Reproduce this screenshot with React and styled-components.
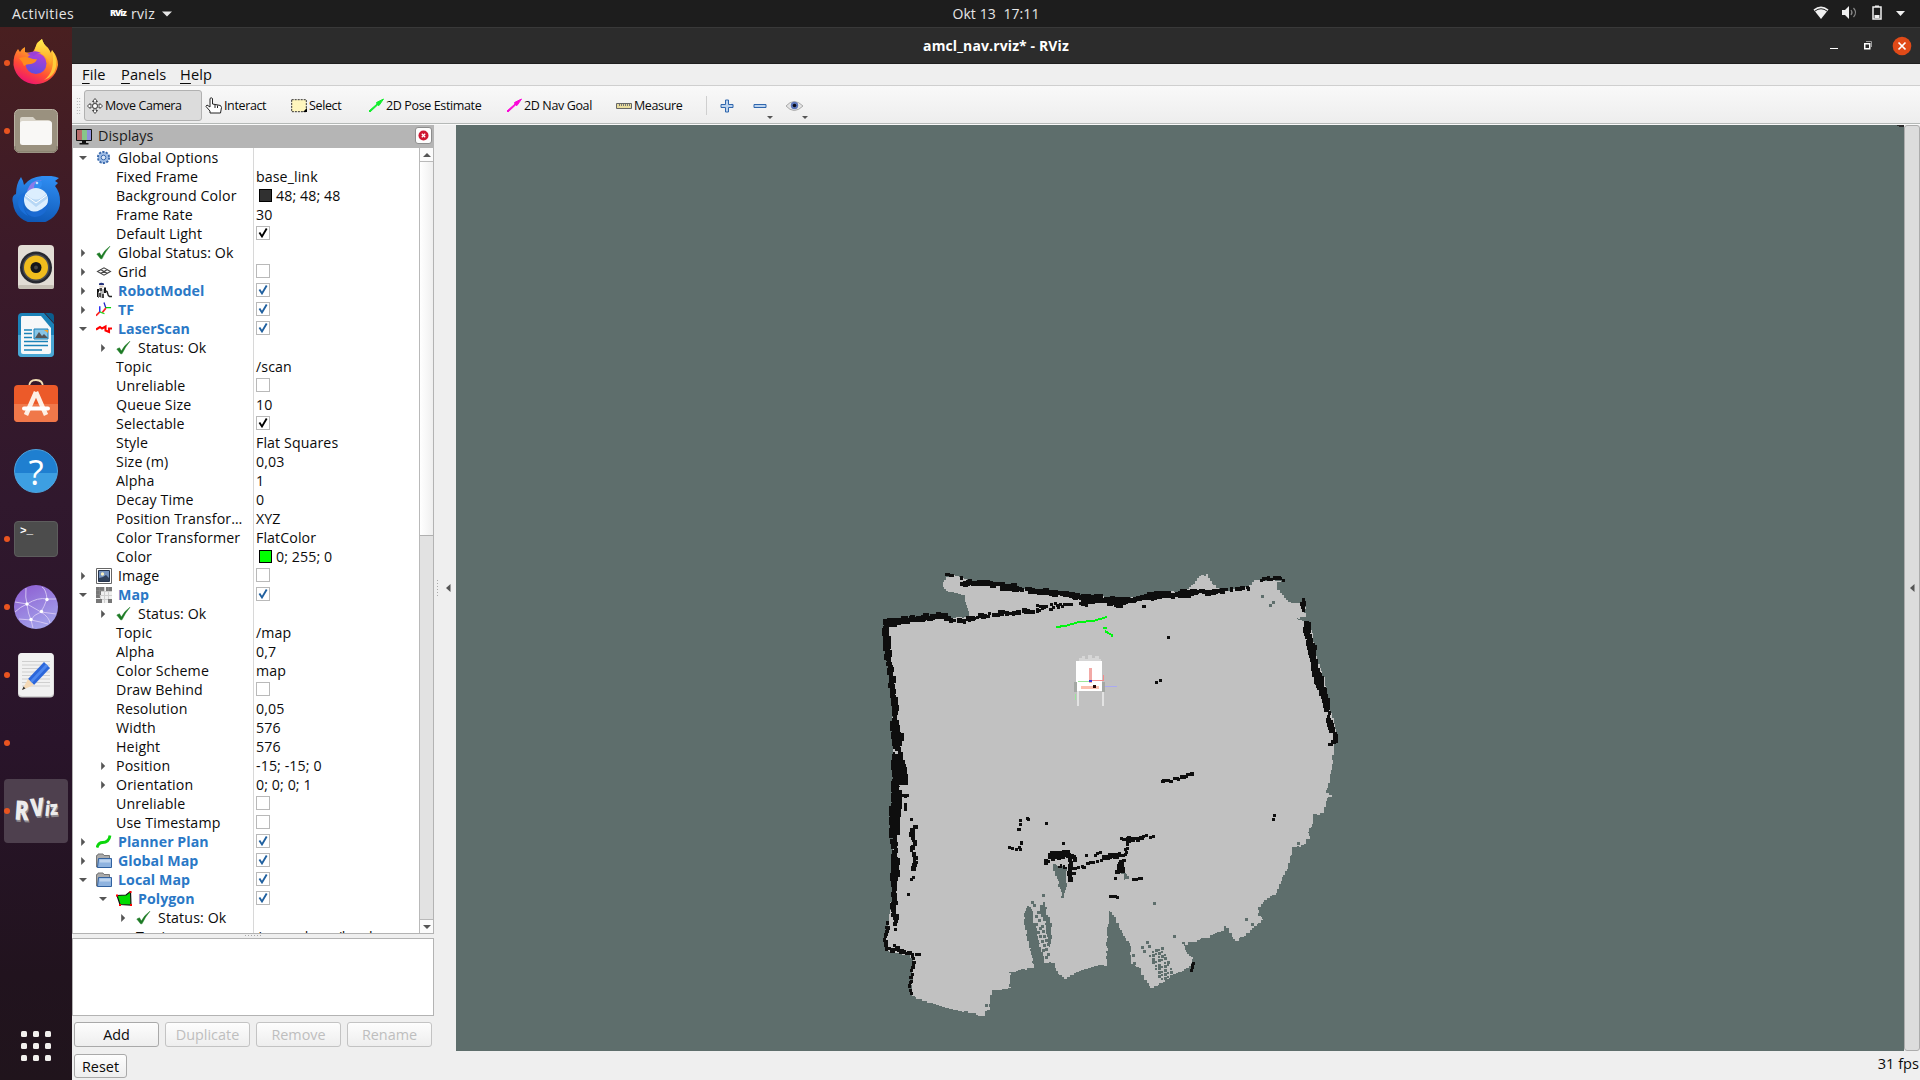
import React from 'react';
import styled, { createGlobalStyle } from 'styled-components';

const Global = createGlobalStyle`
  * { box-sizing: border-box; }
  html, body { margin: 0; padding: 0; overflow: hidden; background: #efefef; }
  body { font-family: "Open Sans", "Noto Sans", sans-serif; font-size: 14px; color: #0b0b0b; }
`;

/* ---------- frame ---------- */
const Screen = styled.div`
  width: 1920px; height: 1080px; display: flex; flex-direction: column; overflow: hidden;
`;
const TopBar = styled.header`
  height: 27px; background: #1d1d1d; color: #e6e6e6; display: grid;
  grid-template-columns: 1fr auto 1fr; align-items: center; font-size: 14px;
`;
const TopLeft = styled.div`display: flex; align-items: center; padding-left: 12px;`;
const Activities = styled.span`width: 62px; letter-spacing: 0.45px;`;
const AppMenu = styled.div`display: flex; align-items: center; margin-left: 36px; gap: 7px; letter-spacing: 0.3px;`;
const MiniLogo = styled.span`
  font-size: 9px; font-weight: 800; color: #fff; letter-spacing: -1px; width: 14px; white-space: nowrap;
  transform: translateY(-1px);
`;
const Clock = styled.div`white-space: pre; letter-spacing: 0.1px; transform: translateX(36px);`;
const Tray = styled.div`display: flex; justify-content: flex-end; align-items: center; padding-right: 11px;`;
const Body = styled.div`flex: 1; display: flex; min-height: 0;`;

/* ---------- dock ---------- */
const Dock = styled.nav`
  width: 72px; display: flex; flex-direction: column; padding-top: 2px;
  background: linear-gradient(180deg, #491f20 0%, #3b1a29 22%, #30182d 45%, #29142a 68%, #21131e 90%, #20141c 100%);
`;
const DockItem = styled.div`
  height: 68px; position: relative; display: flex; align-items: center; justify-content: center;
`;
const Dot = styled.i`
  position: absolute; left: 4px; top: 31px; width: 6px; height: 6px; border-radius: 50%; background: #e95420;
`;
const ActiveTile = styled.div`
  width: 64px; height: 64px; border-radius: 4px; background: #4e404e;
  display: flex; align-items: center; justify-content: center;
`;
const Logo = styled.div`
  color: #ececec; font: 800 20px/26px "Open Sans", sans-serif; display: flex; align-items: baseline;
  text-shadow: 1px 2px 0 #8d888d; transform: translateY(-1px);
`;
const LogoLetter = styled.span`
  display: inline-block; font-size: ${p => p.$s}px; transform: rotate(${p => p.$r}deg) scaleX(.8) translateY(${p => p.$y || 0}px);
  margin: 0 -1px;
`;
const Apps = styled.div`
  margin-top: auto; margin-bottom: 19px; display: grid; grid-template-columns: repeat(3, 6px); gap: 6px; justify-content: center;
`;
const AppDot = styled.i`width: 6px; height: 6px; border-radius: 1.5px; background: #f2f0ee;`;

/* ---------- window ---------- */
const Win = styled.main`flex: 1; min-width: 0; display: flex; flex-direction: column; background: #efefef;`;
const TitleBar = styled.div`
  height: 37px; background: #2c2c2c; border-top: 1px solid #393939; border-bottom: 1px solid #1f1f1f;
  color: #fff; display: grid; grid-template-columns: 1fr auto 1fr; align-items: center;
  font-weight: 700; font-size: 14px; letter-spacing: 0.12px;
`;
const WinButtons = styled.div`display: flex; justify-content: flex-end; align-items: center; padding-right: 8px;`;
const MenuBar = styled.div`
  height: 22px; border-bottom: 1px solid #cfcfcf; display: flex; padding-left: 10px; gap: 15px; line-height: 21px; font-size: 14.6px;
`;
const MenuItem = styled.span`width: ${p => p.$w}px; white-space: nowrap; letter-spacing: 0.1px;`;
const U = styled.span`text-decoration: underline; text-underline-offset: 3px; text-decoration-thickness: 1px;`;
const ToolBar = styled.div`
  height: 39px; border-bottom: 1px solid #fafafa; box-shadow: inset 0 -1px #b5b9b7;
  background: linear-gradient(180deg, #f9f9f9, #ededed); display: flex; align-items: flex-start; font-size: 12.5px;
`;
const Handle = styled.div`
  width: 5px; height: 17px; margin: 11px 3px 0 4px;
  background-image: radial-gradient(circle, #a9a9a9 0.7px, transparent 0.8px); background-size: 2.5px 3px;
`;
const Tool = styled.div`
  height: 31px; margin-top: 4px; display: flex; align-items: center; padding-left: 2px; width: ${p => p.$w}px; white-space: nowrap;
  border: 1px solid ${p => (p.$on ? '#b1b1b1' : 'transparent')}; border-radius: 3px; background: ${p => (p.$on ? '#dcdcdc' : 'transparent')};
  letter-spacing: -0.37px; gap: 2px;
`;
const ToolSep = styled.div`width: 1px; height: 19px; background: #cfcfcf; margin: 10px 13px 0 0;`;
const IconTool = styled.div`width: 33px; height: 35px; display: flex; align-items: center; position: relative; margin-top: 2px;`;
const Drop = styled.i`
  position: absolute; left: 14px; bottom: 4px; border: 3px solid transparent; border-top-color: #555; border-bottom: 0;
`;
const EyeDrop = styled(Drop)`left: 16px;`;
const Work = styled.div`flex: 1; min-height: 0; display: flex;`;
const Side = styled.section`width: 362px; display: flex; flex-direction: column;`;
const PanelHead = styled.div`
  height: 23px; background: #b5b5b5; display: flex; align-items: center; padding: 0 2px 0 4px; font-size: 14.4px; color: #1c1c1c;
`;
const PanelName = styled.span`flex: 1; padding-left: 6px; line-height: 20px; margin-top: -2px;`;
const CloseBox = styled.div`
  width: 17px; height: 17px; border-radius: 3px; background: #fdfdfd; border: 1px solid #8d8d8d; display: flex; align-items: center; justify-content: center;
  margin-top: -3px;
`;
const Tree = styled.div`
  height: 786px; border: 1px solid #b3b3b3; border-top: 0; background: #fff; display: flex; overflow: hidden;
`;
const Rows = styled.div`width: 346px;`;
const Row = styled.div`
  height: 19px; display: grid; grid-template-columns: 180px 1fr; font-size: 14.2px; line-height: 19px; letter-spacing: 0.1px;
`;
const NameCell = styled.div`
  display: flex; align-items: center; padding-left: ${p => p.$lvl * 20}px; border-right: 1px solid #d8d8d8; width: 181px; overflow: hidden;
`;
const ArrowCell = styled.span`width: 20px; margin-right: 3px; display: flex; justify-content: center; flex: none;`;
const IconCell = styled.span`width: 16px; height: 19px; margin-right: 6px; display: flex; align-items: center; flex: none;`;
const Name = styled.span`
  white-space: nowrap; color: ${p => (p.$b ? '#2a78c6' : '#0b0b0b')}; font-weight: ${p => (p.$b ? 700 : 400)};
  letter-spacing: ${p => (p.$b ? 0.05 : 0.13)}px;
`;
const Value = styled.div`padding-left: 3px; display: flex; align-items: center; white-space: nowrap;`;
const Swatch = styled.i`width: 13px; height: 13px; border: 1px solid #000; background: ${p => p.$c}; margin: 0 4px 0 3px;`;
const Check = styled.span`
  width: 14px; height: 14px; border: 1px solid #b9b9b9; background: #fff; display: flex; align-items: center; justify-content: center; margin-top: -1px;
`;
const Scroll = styled.div`
  width: 14px; display: flex; flex-direction: column; justify-content: space-between; border-left: 1px solid #b9b9b9; background: #e2e2e2;
`;
const ScrollBtn = styled.div`
  height: 14px; background: #fbfbfb; display: flex; align-items: center; justify-content: center;
  border-${p => p.$edge}: 1px solid #b9b9b9;
`;
const Thumb = styled.div`height: 374px; background: linear-gradient(90deg, #fff, #efefef); border-bottom: 1px solid #b0b0b0;`;
const Splitter = styled.div`height: 4px; display: flex; justify-content: center;`;
const Grip = styled.i`width: 17px; height: 1px; margin-top: 1px; background: repeating-linear-gradient(90deg, #a8a8a8 0 1px, transparent 1px 3px);`;
const HelpBox = styled.div`height: 78px; border: 1px solid #b3b3b3; background: #fff;`;
const Buttons = styled.div`display: flex; gap: 6px; padding: 6px 2px 0;`;
const Btn = styled.button`
  width: ${p => p.$w || 85}px; height: ${p => p.$h || 25}px; border: 1px solid ${p => (p.disabled ? '#c3c3c3' : '#a9a9a9')}; border-radius: 3px; padding: 0;
  background: linear-gradient(180deg, #fdfdfd, #eeeeee); font: 14.4px "Open Sans", sans-serif; color: ${p => (p.disabled ? '#bebebe' : '#0b0b0b')};
`;
const Gutter = styled.div`width: 22px; display: flex; align-items: center; gap: 6px; padding: 0 0 0 3px;`;
const GutterGrip = styled.i`width: 1px; height: 17px; background: repeating-linear-gradient(180deg, #aaa 0 1px, transparent 1px 3px);`;
const View = styled.div`width: 1448px; height: 926px; background: #5e6e6c;`;
const Scene = styled.svg`display: block;`;
const RightStrip = styled.div`
  width: 16px; height: 926px; background: #dcdcdc; border: 1px solid #acacac; border-radius: 3px; display: flex; align-items: center; padding-left: 3px;
`;
const Status = styled.footer`height: 29px; display: flex; justify-content: space-between; padding: 3px 1px 0 2px; font-size: 14.6px;`;
const Fps = styled.span`line-height: 18px;`;

/* ---------- small marks ---------- */
const Tri = ({ d, c = '#555', s = 8 }) => (
  <svg width={s} height={s} viewBox="0 0 8 8">
    <path fill={c} d={{ down: 'M0 2h8L4 6z', up: 'M0 6h8L4 2z', right: 'M2.2 0v8l4-4z', left: 'M6.5 0v8L2 4z' }[d]} />
  </svg>
);
const Tick = ({ c }) => (
  <svg width="10" height="10" viewBox="0 0 10 10"><path d="M1.400 4.400 4 8.400 8.700.600" fill="none" stroke={c} strokeWidth="1.900" /></svg>
);

const icons = {
  gear: (
    <svg width="16" height="16" viewBox="0 0 16 16"><circle cx="7.5" cy="7.5" r="5.6" fill="#a6c1e6" stroke="#3d6cae" strokeWidth="2" strokeDasharray="2.2 1.3" />
      <circle cx="7.5" cy="7.5" r="4.6" fill="#9dbbe4" /><circle cx="7.5" cy="7.5" r="2.3" fill="#dbe7f6" stroke="#3d6cae" /></svg>
  ),
  ok: (
    <svg width="16" height="16" viewBox="0 0 16 16"><path d="M.800 9l2.700-1.200L5.300 11Q8.500 5 14 1.200 9 7 6 13.800H4.600z" fill="#1c7a24" stroke="#1c7a24" strokeWidth=".5" /></svg>
  ),
  grid: (
    <svg width="16" height="16" viewBox="0 0 16 16"><path d="M1.500 7.500 8 3.800l6.500 3.700L8 11.200zM4.500 5.500l7 4M11.500 5.500l-7 4" fill="none" stroke="#444" strokeWidth="1.100" /></svg>
  ),
  robot: (
    <svg width="16" height="17" viewBox="0 0 16 17"><path d="M3 1.500Q5 0 8 1.500V3H3z" fill="#27357c" /><path d="M3.500 3.500h4v2h-4z" fill="#d6c9bd" />
      <path d="M1 7h2v8H1zM3.500 6h2.500v3H3.500zM8 5.500h2V11H8z" fill="#111" /><path d="M5 6v10M2.500 10v6M7 7v9" stroke="#777" /><path d="M4 11v4M9 10q2-2 2.500 1t2 3.500H16M7 12v4" fill="none" stroke="#222" strokeWidth="1.500" /></svg>
  ),
  tf: (
    <svg width="17" height="16" viewBox="0 0 17 16" fill="none"><path d="M8.500 0l2 6" stroke="#2323c8" strokeWidth="1.400" /><path d="M10 5.500h6" stroke="#0c0" strokeWidth="1.300" />
      <path d="M10.500 6 6.500 11M4 10l-4 4" stroke="#f22" strokeWidth="1.800" /><path d="M4 4v6" stroke="#2323f0" strokeWidth="1.500" /><path d="M4 10l5 2" stroke="#2d2" strokeWidth="1.300" /></svg>
  ),
  laser: (
    <svg width="16" height="16" viewBox="0 0 16 16"><path d="M0 8.500 4 6l2 1.500L9.500 5.500v4l3.500 1.500V7.500h3" fill="none" stroke="#f00" strokeWidth="2.100" /></svg>
  ),
  image: (
    <svg width="16" height="16" viewBox="0 0 16 16"><path d="M.5.500h15v15H.5z" fill="#fff" stroke="#666" /><path d="M2.500 2.500h11v11h-11z" fill="#7592bd" stroke="#26344c" />
      <circle cx="6.500" cy="6" r="1.700" fill="#f7efc0" /><path d="M3 13v-3l4-1 3-2 3 3v3z" fill="#31415b" /></svg>
  ),
  map: (
    <svg width="16" height="16" viewBox="0 0 16 16" shapeRendering="crispEdges"><path d="M0 0h16v16H0z" fill="#f0f0f0" />
      <path d="M4 0v16M8 0v16M12 0v16M0 4h16M0 8h16M0 12h16" stroke="#cfcfcf" strokeWidth="1" />
      <path d="M0 0h8v4H5v4H4v3H0zM10 0h6v4h-6zM0 12h6v4H0zM12 12h4v4h-4z" fill="#777" /><path d="M0 3.500h8M3.500 0v10M0 7.500h4M12.500 0v4" stroke="#8d8d8d" strokeWidth=".6" /></svg>
  ),
  plan: (
    <svg width="16" height="16" viewBox="0 0 16 16"><path d="M1 13.500Q2.500 8.500 6.500 8.500 13 8.500 14 1.500" fill="none" stroke="#0bd60b" strokeWidth="2.800" /></svg>
  ),
  folder: (
    <svg width="16" height="16" viewBox="0 0 16 16"><path d="M.5 14V2.500h1l.5-1.500h5l1 1.500h5.500V14z" fill="#aaa" stroke="#777" /><path d="M2.500 5.500h13v9h-14z" fill="#8fb3df" stroke="#31619f" />
      <path d="M3.500 6.500h11v3h-11z" fill="#bed4ee" /></svg>
  ),
  poly: (
    <svg width="16" height="16" viewBox="0 0 16 16"><path d="M1 4.500 10 4l4.500-3.500.5 13.500-11-.5z" fill="#00dc00" stroke="#111" strokeWidth="1.200" />
      <path d="M0 3.500h2v2H0zM13.500 0h2v2h-2zM3 13h2v2H3zM14 13h2v2h-2z" fill="#f00" /></svg>
  ),
};

/* ---------- dock icons ---------- */
const Firefox = () => (
  <svg width="46" height="48" viewBox="0 0 46 48">
    <defs>
      <linearGradient id="ff1" x1=".8" y1="0" x2=".3" y2="1"><stop offset="0" stopColor="#ffe14a" /><stop offset=".4" stopColor="#ff9a28" /><stop offset=".7" stopColor="#ff4b36" /><stop offset="1" stopColor="#ec1173" /></linearGradient>
      <linearGradient id="ff2" x1=".6" y1="0" x2=".3" y2="1"><stop offset="0" stopColor="#b33fd8" /><stop offset="1" stopColor="#5a4ee0" /></linearGradient>
      <linearGradient id="ff3" x1="0" y1="0" x2="0" y2="1"><stop offset="0" stopColor="#fff04e" /><stop offset="1" stopColor="#ff9b24" /></linearGradient>
    </defs>
    <path d="M5 10l2 3q1-3 5-5v5q4 1 8 0Q23 8 24 4L29 0q1 5 6 9l2 6 2-4q6 7 6 15A22.500 22.500 0 0 1 .5 26Q0 16 5 10z" fill="url(#ff1)" />
    <path d="M22 12Q22 5 29 0q1 5 6 9 4 5 4 12l-2 5q-3-11-15-14z" fill="url(#ff3)" />
    <path d="M39 11q5 7 4 17-2 10-12 13 12-8 8-30z" fill="#ffd83e" opacity=".8" />
    <circle cx="23" cy="24.500" r="10.500" fill="url(#ff2)" />
    <path d="M6 19q7-2 11 0 5 2 7 1-1 4-6 5-5 0-7 2-2-5-5-8z" fill="#ff8a1e" />
    <path d="M14 15q7-5 14-1-5 0-7 3z" fill="#9a3fd6" />
  </svg>
);
const Files = () => (
  <svg width="44" height="44" viewBox="0 0 44 44"><rect x=".5" y=".5" width="43" height="43" rx="5" fill="#9a917f" stroke="#b9b2a2" />
    <path d="M6 10q0-2 2-2h11l3 3h12q3 0 3 3v6H6z" fill="#d9d4c9" /><rect x="6" y="12" width="32" height="24" rx="2.500" fill="#f9f8f6" /><path d="M1 37v2q0 4 4 4h34q4 0 4-4v-2" fill="none" stroke="#7f7767" /></svg>
);
const Thunderbird = () => (
  <svg width="48" height="46" viewBox="0 0 48 46">
    <defs><linearGradient id="tb" x1=".6" y1="0" x2=".4" y2="1"><stop offset="0" stopColor="#2f8df2" /><stop offset="1" stopColor="#0d56b4" /></linearGradient></defs>
    <path d="M9 1Q11 4 12 9 18 1 30 0 40-1 47 2l-4 3 3 2-3 3q5 6 5 15A23.500 21.500 0 0 1 1 27Q-1 20 4 18 4 8 9 1z" fill="url(#tb)" />
    <path d="M15 15Q19 3 30 4 22 7 24 12z" fill="#8b7ae8" /><path d="M22 12Q22 5 28 4q4 4 0 8z" fill="#2f8df2" /><circle cx="25" cy="7" r="1.300" fill="#bfe0ff" />
    <path d="M8 19q-6 14 8 21Q6 27 16 15z" fill="#1a6fd8" />
    <circle cx="24" cy="24" r="12" fill="#dceefe" /><path d="M14 18q10 11 20 0l2 4-12 9-11-9z" fill="#b7d7f5" /><path d="M13 19l11 8 11-8" fill="none" stroke="#fff" />
    <path d="M13 34q14 6 24-8-2 14-14 15-7 0-10-7z" fill="#1a6ad2" />
  </svg>
);
const Rhythm = () => (
  <svg width="36" height="44" viewBox="0 0 36 44"><rect width="36" height="44" rx="4" fill="#e2ddd5" /><rect y="40" width="36" height="4" rx="2" fill="#c6c0b5" />
    <circle cx="18" cy="22.500" r="16" fill="#26282f" /><circle cx="18" cy="22.500" r="13.500" fill="#4a4c52" /><circle cx="18" cy="22.500" r="12" fill="#f0bd1d" />
    <circle cx="18" cy="22.500" r="5.500" fill="#14161a" /><circle cx="18" cy="22.500" r="2" fill="#444" /></svg>
);
const Writer = () => (
  <svg width="36" height="44" viewBox="0 0 36 44"><path d="M4 0h22l10 11v29q0 4-4 4H4q-4 0-4-4V4q0-4 4-4z" fill="#1b82b8" /><path d="M0 22h36v18q0 4-4 4H4q-4 0-4-4z" fill="#4aa7d4" />
    <path d="M27 0h5q4 0 4 4v6z" fill="#0b5c8c" /><path d="M4 3h19l10 12v24q0 2-2 2H5q-2 0-2-2V5q0-2 1-2z" fill="#f7f8f9" />
    <path d="M6 17h8M6 20.500h8M6 24.500h8M6 28.500h24M6 32.500h24M6 37h18" stroke="#1b82b8" strokeWidth="1.500" /><path d="M16 16h14v10H16z" fill="#87c5e6" stroke="#1b82b8" />
    <path d="M17 25l4-6 3 4 2-2 4 4z" fill="#555" /><path d="M26 17h4v3z" fill="#f3a32b" /></svg>
);
const Software = () => (
  <svg width="44" height="48" viewBox="0 0 44 48"><path d="M15 8q0-7 7-7t7 7" fill="none" stroke="#f2dfb4" strokeWidth="1.800" /><rect y="6" width="44" height="37" rx="4" fill="#ec5a29" /><path d="M0 25h44v14q0 4-4 4H4q-4 0-4-4z" fill="#f0784a" />
    <path d="M22 13 12 36M22 13l10 23" stroke="#fdf0e6" strokeWidth="4.500" /><path d="M10 29.500h24" stroke="#fff" strokeWidth="4" strokeLinecap="round" /></svg>
);
const HelpIcon = styled.div`
  width: 44px; height: 44px; border-radius: 50%; background: linear-gradient(180deg, #1f7fd0 0 54%, #3d9fe2 54%); border: 1px solid #4da4e0;
  color: #fff; font: 400 35px/43px "Open Sans", sans-serif; text-align: center;
`;
const Term = styled.div`
  width: 44px; height: 36px; border-radius: 4px; background: #4c4c4c; border: 1px solid #5d5d5d; color: #fff;
  font: 700 11px/12px "Liberation Mono", monospace; padding: 3px 0 0 5px;
`;
const Net = () => (
  <svg width="44" height="44" viewBox="0 0 44 44"><defs><linearGradient id="nt" x1="0" y1="0" x2=".5" y2="1"><stop offset="0" stopColor="#8b59d0" /><stop offset="1" stopColor="#a3a0ea" /></linearGradient></defs>
    <circle cx="22" cy="22" r="22" fill="url(#nt)" /><g fill="none" stroke="#d9ccf4" strokeWidth=".9"><path d="M12 3q-1 10 1 16 1 10 4 16l2 8M1 17l12 2 14 8 15 2M13 19Q24 12 33 14h9M33 14Q32 4 28 2M33 14Q30 22 27 27M27 27q-8 3-10 8M27 27q8 5 9 11M13 19Q6 22 1 27M17 35l-12-1M17 35q10 2 17 4" /></g>
    <g fill="#fff"><circle cx="13" cy="19" r="1.700" /><circle cx="33" cy="14.500" r="1.700" /><circle cx="27.500" cy="26.500" r="1.700" /><circle cx="17" cy="34.500" r="1.700" /></g></svg>
);
const Gedit = () => (
  <svg width="36" height="45" viewBox="0 0 36 45"><rect width="36" height="44.500" rx="4" fill="#d0d0d0" /><rect x=".5" width="35" height="43" rx="4" fill="#f1f1f1" />
    <path d="M4 8.500h28M4 12h28M4 15.500h28M4 19h28M4 22.500h28M4 26h28M4 29.500h28M4 33h28" stroke="#cfcfcf" />
    <path d="M26 9l6 6-16 17-6-6z" fill="#2b66da" /><path d="M28 11l2 2-16 17-2-2z" fill="#4d87ee" /><path d="M10 26l6 6-12 5z" fill="#f5d9b6" /><path d="M5.500 33.500l2 2L4 37z" fill="#333" /></svg>
);

/* ---------- occupancy map ---------- */
const CELL = 3;
const rng = seed => () => { seed = (seed * 16807) % 2147483647; return seed / 2147483647; };
const B = pts => pts.map(([x, y]) => [x + 720, y]);
const C = pts => pts.map(([x, y]) => [x, y + 690]);
const D = pts => pts.map(([x, y]) => [x + 720, y + 690]);
const toPx = ([x, y]) => [870 + x / 3, 560 + y / 3];

function walk(points, step) {
  const out = [];
  const p = points.map(toPx);
  for (let i = 0; i < p.length - 1; i++) {
    const [ax, ay] = p[i], [bx, by] = p[i + 1];
    const n = Math.max(1, Math.round(Math.hypot(bx - ax, by - ay) / step));
    for (let k = 0; k < n; k++) out.push([ax + ((bx - ax) * k) / n, ay + ((by - ay) * k) / n]);
  }
  out.push(p[p.length - 1]);
  return out;
}
function stairs(points, seed = 7) {
  const r = rng(seed);
  const w = walk(points.concat([points[0]]), CELL);
  let d = '';
  w.forEach(([x, y], i) => {
    const X = Math.round(x + (r() - 0.5) * 1.8), Y = Math.round(y + (r() - 0.5) * 1.8);
    d += i ? `H${X}V${Y}` : `M${X} ${Y}`;
  });
  return d + 'z';
}
/* A wall is a run of cells; long walls wander and vary in thickness, single cells stay square. */
function wall(points, t, seed) {
  const r = rng(seed * 991 + 13);
  const steps = walk(points, 2.6);
  const long = steps.length > 4;
  return steps.map(([x, y]) => {
    const wander = long ? 2.6 : 1;
    const a = Math.max(2.7, t / 3 - 0.8 + (r() - 0.45) * (long ? 3 : 0.8));
    const b = Math.max(2.7, t / 3 - 0.8 + (r() - 0.45) * (long ? 3 : 0.8));
    const X = Math.round(x - a / 2 + (r() - 0.5) * wander), Y = Math.round(y - b / 2 + (r() - 0.5) * wander);
    return `M${X} ${Y}h${Math.round(a)}v${Math.round(b)}h${-Math.round(a)}z`;
  }).join('');
}

const floor = [
  [50, 190], [130, 178], [225, 165], [240, 175], [300, 170], [293, 145], [282, 107], [245, 95], [215, 80], [225, 50], [240, 45], [290, 60],
  [420, 80], [560, 98], [690, 112], [720, 120],
  ...B([[60, 112], [150, 102], [230, 86], [250, 70], [265, 45], [288, 45], [305, 70], [315, 85], [350, 92], [415, 78], [440, 57], [452, 64], [520, 62], [502, 72], [502, 90], [520, 115], [540, 132], [575, 125], [588, 130], [585, 170], [570, 172], [588, 185], [602, 200], [615, 280], [640, 350], [655, 430], [672, 490], [680, 540], [673, 560], [666, 600], [669, 612], [658, 660], [650, 700], [665, 710]]),
  ...D([[655, 25], [643, 70], [612, 75], [605, 110], [592, 130], [597, 148], [575, 172], [550, 168], [540, 210], [530, 245], [517, 262], [503, 308], [458, 342], [445, 360], [445, 375], [462, 390], [425, 422], [385, 452], [368, 440], [350, 408], [335, 408], [340, 420], [300, 440], [235, 463], [215, 455], [225, 485], [250, 510], [245, 530], [190, 557], [125, 597], [110, 570], [85, 530], [65, 515], [62, 460], [40, 430], [20, 390], [2, 362]]),
  ...C([[720, 362], [712, 430], [710, 525], [690, 525], [635, 542], [590, 565], [566, 553], [555, 520], [525, 516], [490, 512], [490, 535], [420, 547], [420, 598], [365, 600], [358, 660], [342, 677], [240, 655], [172, 634], [125, 614], [130, 500], [50, 480], [45, 430], [55, 400], [68, 300], [68, 150], [75, 0]]),
  [72, 600], [70, 480], [65, 400], [55, 300], [50, 220],
];
const holes = [
  C([[550, 222], [592, 235], [590, 290], [582, 325], [576, 325], [570, 290], [555, 250]]),
  C([[475, 342], [488, 362], [492, 400], [503, 440], [512, 480], [522, 522], [488, 520], [480, 470], [470, 430], [460, 370]]),
  C([[508, 345], [525, 332], [530, 375], [541, 400], [547, 445], [540, 470], [532, 440], [525, 390], [512, 372]]),
  D([[35, 248], [48, 250], [58, 268], [48, 268]]),
  B([[562, 174], [578, 174], [592, 183], [575, 181]]),
];
const walls = [
  [[[48, 190], [130, 178], [225, 167]], 20], [[[48, 190], [75, 185]], 22], [[[228, 176], [262, 182], [300, 178], [345, 166], [450, 157], [500, 153]], 14],
  [[[503, 138], [530, 138]], 8], [[[508, 150], [525, 142]], 8], [[[540, 150], [552, 144]], 8], [[[545, 133], [580, 132]], 8], [[[566, 143], [576, 138]], 8], [[[590, 132], [603, 132]], 7], [[[630, 130], [650, 136]], 7],
  [[[228, 42], [248, 46]], 8], [[[275, 54], [275, 54]], 8],
  [[[278, 72], [330, 68], [420, 80], [560, 100], [680, 116], [765, 124]], 17],
  [[[400, 85], [440, 82]], 22], [[[640, 116], [690, 118]], 26],
  [B([[0, 120], [50, 122], [150, 108], [210, 102], [250, 98], [345, 92]]), 16], [B([[0, 124], [45, 128]]), 22], [B([[120, 106], [170, 106]]), 22], [B([[215, 102], [250, 99]]), 24],
  [B([[360, 88], [415, 84]]), 11], [B([[452, 57], [485, 55], [520, 60]]), 12], [B([[582, 122], [582, 150]]), 15],
  [B([[590, 190], [594, 225], [605, 265], [613, 310], [628, 355], [640, 400], [652, 448]]), 21], [B([[620, 340], [632, 370]]), 28],
  [B([[656, 462], [660, 490], [670, 515], [676, 540], [662, 556]]), 13], [B([[658, 490], [668, 510]]), 20],
  [[[50, 190], [50, 255], [60, 320], [68, 390], [76, 450], [78, 520], [80, 600]], 19], [[[50, 240], [50, 265]], 24], [[[75, 500], [85, 545]], 28],
  [[[80, 590], [86, 650]], 34], [[[92, 630], [100, 665]], 32], [[[78, 650], [76, 720]], 24], [[[100, 708], [112, 708]], 10],
  [C([[82, 0], [75, 60], [70, 130]]), 29], [C([[72, 130], [75, 180], [72, 240], [74, 280], [72, 320], [76, 400]]), 17], [C([[72, 210], [74, 260]]), 24],
  [C([[52, 402], [45, 440], [50, 470]]), 12], [C([[50, 475], [95, 483], [145, 492]]), 13], [C([[130, 500], [127, 550], [118, 600]]), 9], [C([[124, 610], [124, 610]]), 8],
  [C([[105, 18], [110, 16]]), 9], [C([[105, 42], [106, 56]]), 9], [C([[124, 88], [124, 88]]), 8], [C([[135, 106], [125, 135], [135, 155], [128, 182]]), 14],
  [C([[135, 192], [132, 240]]), 15], [C([[128, 260], [126, 268]]), 9], [C([[114, 314], [114, 314]]), 8], [C([[76, 418], [76, 418]]), 7], [C([[75, 465], [75, 465]]), 7],
  [C([[451, 92], [450, 102]]), 8], [C([[474, 87], [474, 87]]), 8], [C([[446, 118], [446, 118]]), 8], [C([[528, 100], [528, 100]]), 8], [C([[420, 175], [454, 174]]), 9], [C([[454, 158], [454, 158]]), 8],
  [C([[580, 160], [580, 160]]), 8], [C([[528, 214], [545, 212], [550, 190], [575, 192], [605, 195], [617, 206]]), 15], [C([[545, 200], [560, 196], [590, 190]]), 22], [C([[600, 205], [600, 265]]), 14],
  [C([[572, 230], [582, 232]]), 14], [C([[605, 234], [640, 228]]), 10], [C([[650, 220], [680, 213]]), 8], [C([[695, 208], [722, 200], [745, 192]]), 9], [C([[600, 252], [615, 252]]), 12], [C([[707, 200], [735, 198]]), 16],
  [C([[648, 196], [648, 196]]), 8], [C([[676, 194], [690, 187]]), 7], [D([[0, 196], [14, 196]]), 15],
  [D([[25, 190], [46, 194], [52, 165], [58, 148]]), 9], [D([[38, 146], [75, 146], [110, 140], [128, 140]]), 12], [D([[55, 150], [65, 150]]), 18],
  [D([[40, 210], [30, 230], [24, 246]]), 13], [D([[32, 225], [34, 240]]), 20], [D([[16, 265], [16, 265]]), 7], [D([[72, 269], [96, 265]]), 10], [D([[0, 320], [22, 322]]), 8],
  [D([[491, 76], [490, 86]]), 8], [D([[250, 518], [245, 540]]), 9],
  [B([[103, 139], [100, 140]]), 8], [B([[175, 232], [175, 232]]), 9], [B([[139, 367], [139, 367]]), 8], [B([[151, 359], [151, 360]]), 8],
  [B([[157, 666], [185, 660], [200, 656], [215, 650], [245, 645]]), 11], [B([[245, 638], [245, 645]]), 11],
];
const specks = [
  ...B([[456, 110], [490, 128], [480, 136]]), ...C([[520, 316], [348, 645], [486, 337], [494, 347]]), ...D([[132, 341], [193, 440], [112, 458], [98, 472], [104, 485], [118, 468], [70, 495], [410, 388], [426, 402], [565, 160], [72, 520]]),
  ...C([[505, 368], [498, 380], [507, 392], [500, 404], [512, 415], [506, 428], [518, 408], [520, 425], [512, 438], [524, 440], [518, 455], [530, 452], [524, 466], [536, 462], [530, 478], [520, 482], [534, 492], [528, 502]]),
];
/* free cells left between scan rays: a skewed lattice running down to the right */
const lattice = [];
for (let i = 0; i < 9; i++) {
  for (let j = 0; j < 5; j++) {
    const x = 120 + i * 4.5 + j * 9 - (i % 2) * 4, y = 488 + i * 10 - j * 3;
    if ((i * 3 + j * 5) % 11 !== 0 && x < 190 && y < 576) lattice.push([720 + x, 690 + y]);
  }
}
const square = s => ([x, y]) => { const [X, Y] = toPx([x, y]); return `M${Math.round(X - s / 2)} ${Math.round(Y - s / 2)}h${s}v${s}h${-s}z`; };
const gaps = [[80, 577], [92, 685], [578, 900], [584, 904], [564, 912], [590, 915]];

const MapScene = () => (
  <Scene width="1448" height="926" viewBox="456 125 1448 926" shapeRendering="crispEdges">
    <path d={stairs(floor)} fill="#c1c1c1" />
    <path d={holes.map((h, i) => stairs(h, i + 3)).join('')} fill="#5e6e6c" />
    <path d={specks.map(square(3)).join('') + lattice.map((p, i) => square(i % 2 ? 3 : 2)(p)).join('')} fill="#5e6e6c" />
    <path d={walls.map(([p, t], i) => wall(p, t, i + 1)).join('')} fill="#0e0e0e" />
    <path d={gaps.map(square(3)).join('')} fill="#c1c1c1" />
    <path d="M1056 627l9-1 14-4 14-1 14-4M1103 628h4M1105 631l3 2 4 2v2" fill="none" stroke="#00f610" strokeWidth="2" />
    <g>
      <path d="M1076 661h26v30h-26z" fill="#fff" />
      <path d="M1079 658h3v-2h3v3h3v-4h4v3h3v-2h4v3h2v2h-22z" fill="#d6d6d6" />
      <path d="M1077 691h2v15h-2zM1102 691h2v15h-2z" fill="#e3e3e3" />
      <path d="M1074 682h3v10h-3zM1102 682h3v10h-3z" fill="#a4a8a4" />
      <path d="M1075 694h1v6h-1zM1078 681h14v1h-14z" fill="#9be69b" />
      <path d="M1089 668h3v15h-3z" fill="#f2a9a6" /><path d="M1092 680h12v1h-12zM1103 675h1v5h-1z" fill="#f38b8b" />
      <path d="M1081 686h18v3h-18z" fill="#fbbfae" /><path d="M1093 685h3v3h-3z" fill="#2a0b0b" />
      <path d="M1089 680h3v2h-3z" fill="#3a36d8" /><path d="M1105 686h12v1h-12z" fill="#aaaaf2" />
    </g>
    <path d="M1896 125h8v2h-4z" fill="#2b2b2b" />
  </Scene>
);

/* ---------- tree data: [level, arrow, icon, name, value, bold, colour] ---------- */
const rows = [
  [0, 'down', 'gear', 'Global Options', ''], [1, '', '', 'Fixed Frame', 'base_link'], [1, '', '', 'Background Color', '48; 48; 48', 0, '#303030'],
  [1, '', '', 'Frame Rate', '30'], [1, '', '', 'Default Light', true], [0, 'right', 'ok', 'Global Status: Ok', ''], [0, 'right', 'grid', 'Grid', false],
  [0, 'right', 'robot', 'RobotModel', true, 1], [0, 'right', 'tf', 'TF', true, 1], [0, 'down', 'laser', 'LaserScan', true, 1], [1, 'right', 'ok', 'Status: Ok', ''],
  [1, '', '', 'Topic', '/scan'], [1, '', '', 'Unreliable', false], [1, '', '', 'Queue Size', '10'], [1, '', '', 'Selectable', true], [1, '', '', 'Style', 'Flat Squares'],
  [1, '', '', 'Size (m)', '0,03'], [1, '', '', 'Alpha', '1'], [1, '', '', 'Decay Time', '0'], [1, '', '', 'Position Transfor…', 'XYZ'], [1, '', '', 'Color Transformer', 'FlatColor'],
  [1, '', '', 'Color', '0; 255; 0', 0, '#00ff00'], [0, 'right', 'image', 'Image', false], [0, 'down', 'map', 'Map', true, 1], [1, 'right', 'ok', 'Status: Ok', ''],
  [1, '', '', 'Topic', '/map'], [1, '', '', 'Alpha', '0,7'], [1, '', '', 'Color Scheme', 'map'], [1, '', '', 'Draw Behind', false], [1, '', '', 'Resolution', '0,05'],
  [1, '', '', 'Width', '576'], [1, '', '', 'Height', '576'], [1, 'right', '', 'Position', '-15; -15; 0'], [1, 'right', '', 'Orientation', '0; 0; 0; 1'],
  [1, '', '', 'Unreliable', false], [1, '', '', 'Use Timestamp', false], [0, 'right', 'plan', 'Planner Plan', true, 1], [0, 'right', 'folder', 'Global Map', true, 1],
  [0, 'down', 'folder', 'Local Map', true, 1], [1, 'down', 'poly', 'Polygon', true, 1], [2, 'right', 'ok', 'Status: Ok', ''], [2, '', '', 'Topic', '/move_base/local_cos'],
];
const TreeRow = ({ r: [lvl, arrow, icon, name, value, bold, color] }) => (
  <Row>
    <NameCell $lvl={lvl}>
      <ArrowCell>{arrow && <Tri d={arrow} />}</ArrowCell>
      {icon && <IconCell>{icons[icon]}</IconCell>}
      <Name $b={bold}>{name}</Name>
    </NameCell>
    <Value>
      {color && <Swatch $c={color} />}
      {typeof value === 'boolean' ? <Check>{value && <Tick c={bold ? '#20609f' : '#000'} />}</Check> : value}
    </Value>
  </Row>
);

const Arrow3d = ({ c }) => (
  <svg width="16" height="16" viewBox="0 0 16 16"><path d="M1 13l8-7-.5-1.500L15.500 1 11 7.500 9.500 7 2 14z" fill={c} stroke={c} /></svg>
);
const dockItems = [
  [<Firefox />, 1], [<Files />, 1], [<Thunderbird />, 0], [<Rhythm />, 0], [<Writer />, 0], [<Software />, 0], [<HelpIcon>?</HelpIcon>, 0],
  [<Term>&gt;_</Term>, 1], [<Net />, 1], [<Gedit />, 1], [null, 1],
];

export default function App() {
  return (
    <Screen>
      <Global />
      <TopBar>
        <TopLeft>
          <Activities>Activities</Activities>
          <AppMenu><MiniLogo>RViz</MiniLogo><span>rviz</span><Tri d="down" c="#e6e6e6" s={10} /></AppMenu>
        </TopLeft>
        <Clock>Okt 13  17:11</Clock>
        <Tray>
          <svg width="96" height="20" viewBox="0 0 96 20" fill="#f0f0f0">
            <path d="M.5 5.500Q8-.5 15.500 5.500L8 15z" /><path d="M2 7Q8 2.500 14 7" fill="none" stroke="#1d1d1d" strokeWidth="1" />
            <path d="M29 6h3l4-4v13l-4-4h-3z" /><path d="M38 6q2 2.500 0 5M40.500 4q4 4.500 0 9" fill="none" stroke="#8a8a8a" strokeWidth="1.200" />
            <path d="M60 3h8v12h-8z" fill="none" stroke="#f0f0f0" strokeWidth="1.500" /><path d="M62 1.500h4V3h-4zM61.500 11h5v3h-5z" /><path d="M83 7h9l-4.500 5z" />
          </svg>
        </Tray>
      </TopBar>
      <Body>
        <Dock>
          {dockItems.map(([icon, run], i) => <DockItem key={i}>{run ? <Dot /> : null}{icon}</DockItem>)}
          <DockItem>
            <ActiveTile><Logo><LogoLetter $s={27} $r={4} $y={1}>R</LogoLetter><LogoLetter $s={25} $r={-6} $y={-3}>V</LogoLetter><LogoLetter $s={20} $r={6} $y={-3}>i</LogoLetter><LogoLetter $s={20} $r={-3} $y={-4}>z</LogoLetter></Logo></ActiveTile>
            <Dot />
          </DockItem>
          <Apps>{Array.from({ length: 9 }, (_, i) => <AppDot key={i} />)}</Apps>
        </Dock>
        <Win>
          <TitleBar>
            <span />
            <span>amcl_nav.rviz* - RViz</span>
            <WinButtons>
              <svg width="84" height="22" viewBox="0 0 84 22" fill="none" stroke="#fff">
                <path d="M2 13.500h8" /><path d="M36.750 8.750h5v5h-5z" strokeWidth="1.500" /><path d="M38 6.500h5.500V12" stroke="#999" />
                <circle cx="74" cy="11" r="9.300" fill="#e04a18" stroke="none" /><path d="M70.500 7.500l7 7M77.500 7.500l-7 7" strokeWidth="1.700" />
              </svg>
            </WinButtons>
          </TitleBar>
          <MenuBar>
            <MenuItem $w={24}><U>F</U>ile</MenuItem><MenuItem $w={44}><U>P</U>anels</MenuItem><MenuItem $w={34}><U>H</U>elp</MenuItem>
          </MenuBar>
          <ToolBar>
            <Handle />
            <Tool $w={118} $on>
              <svg width="16" height="16" viewBox="0 0 16 16" fill="#fff" stroke="#333" strokeWidth=".9"><path d="M8 .5 10.500 3.500H9V7h4V5.500L15.500 8 13 10.500V9H9v3.500h1.500L8 15.500 5.500 12.500H7V9H3v1.500L.5 8 3 5.500V7h4V3.500H5.500z" /><circle cx="8" cy="8" r="2.500" /></svg>
              Move Camera
            </Tool>
            <Tool $w={86}>
              <svg width="17" height="17" viewBox="0 0 17 17" fill="#fff" stroke="#222"><path d="M5 16v-2L1 9.500 2 8l3 2V1.500Q6 0 7.500 1.500V7l8 1.500 1 2-1 5.500zM10 8v3M12.500 8.500V11" /></svg>
              Interact
            </Tool>
            <Tool $w={77}>
              <svg width="16" height="14" viewBox="0 0 16 14"><path d="M.7.700h14.600v12H.7z" fill="#fff6bd" stroke="#333" strokeDasharray="2 1" /><path d="M12 13l4-4v4z" fill="#000" /></svg>
              Select
            </Tool>
            <Tool $w={138}><Arrow3d c="#12ee2c" />2D Pose Estimate</Tool>
            <Tool $w={110}><Arrow3d c="#fb06d8" />2D Nav Goal</Tool>
            <Tool $w={93}>
              <svg width="16" height="16" viewBox="0 0 16 16"><path d="M.5 5.500h15v5H.5z" fill="#e8dc9d" stroke="#666" /><path d="M3.500 6v2M5.500 6v2M7.500 6v2M9.500 6v2M11.500 6v2M13.500 6v2" stroke="#777" /></svg>
              Measure
            </Tool>
            <ToolSep />
            <IconTool><svg width="14" height="14" viewBox="0 0 14 14"><path d="M5.500 1h3v4.500H13v3H8.500V13h-3V8.500H1v-3h4.500z" fill="#bcd3ee" stroke="#2f66ad" /></svg></IconTool>
            <IconTool><svg width="14" height="14" viewBox="0 0 14 14"><path d="M1 5.500h12v3H1z" fill="#bcd3ee" stroke="#2f66ad" /></svg><Drop /></IconTool>
            <IconTool><svg width="17" height="14" viewBox="0 0 17 14"><path d="M0 7q8-9 17 0-9 9-17 0z" fill="#e4e4e4" stroke="#aaa" /><circle cx="8.500" cy="6.500" r="3.700" fill="#5a74b8" /><circle cx="8.500" cy="6.500" r="1.800" fill="#0a0a18" /></svg><EyeDrop /></IconTool>
          </ToolBar>
          <Work>
            <Side>
              <PanelHead>
                <svg width="16" height="16" viewBox="0 0 16 16"><path d="M.5.500h15v11H.5z" fill="#87c58a" stroke="#111" /><path d="M1 1h5v10H1z" fill="#b96d6d" /><path d="M11 1h4v10h-4z" fill="#8f8fdc" /><path d="M6 12h4v2H6zM3.500 14h9v1.500h-9z" fill="#111" /></svg>
                <PanelName>Displays</PanelName>
                <CloseBox><svg width="11" height="11" viewBox="0 0 11 11"><circle cx="5.500" cy="5.500" r="5" fill="#cf1732" /><path d="M3.800 3.800l3.400 3.400M7.200 3.800 3.800 7.200" stroke="#fff" strokeWidth="1.300" /></svg></CloseBox>
              </PanelHead>
              <Tree>
                <Rows>{rows.map((r, i) => <TreeRow key={i} r={r} />)}</Rows>
                <Scroll>
                  <div>
                    <ScrollBtn $edge="bottom"><Tri d="up" /></ScrollBtn>
                    <Thumb />
                  </div>
                  <ScrollBtn $edge="top"><Tri d="down" /></ScrollBtn>
                </Scroll>
              </Tree>
              <Splitter><Grip /></Splitter>
              <HelpBox />
              <Buttons>
                <Btn>Add</Btn><Btn disabled>Duplicate</Btn><Btn disabled>Remove</Btn><Btn disabled>Rename</Btn>
              </Buttons>
            </Side>
            <Gutter><GutterGrip /><Tri d="left" /></Gutter>
            <View><MapScene /></View>
            <RightStrip><Tri d="left" /></RightStrip>
          </Work>
          <Status><Btn $w={53} $h={24}>Reset</Btn><Fps>31 fps</Fps></Status>
        </Win>
      </Body>
    </Screen>
  );
}
